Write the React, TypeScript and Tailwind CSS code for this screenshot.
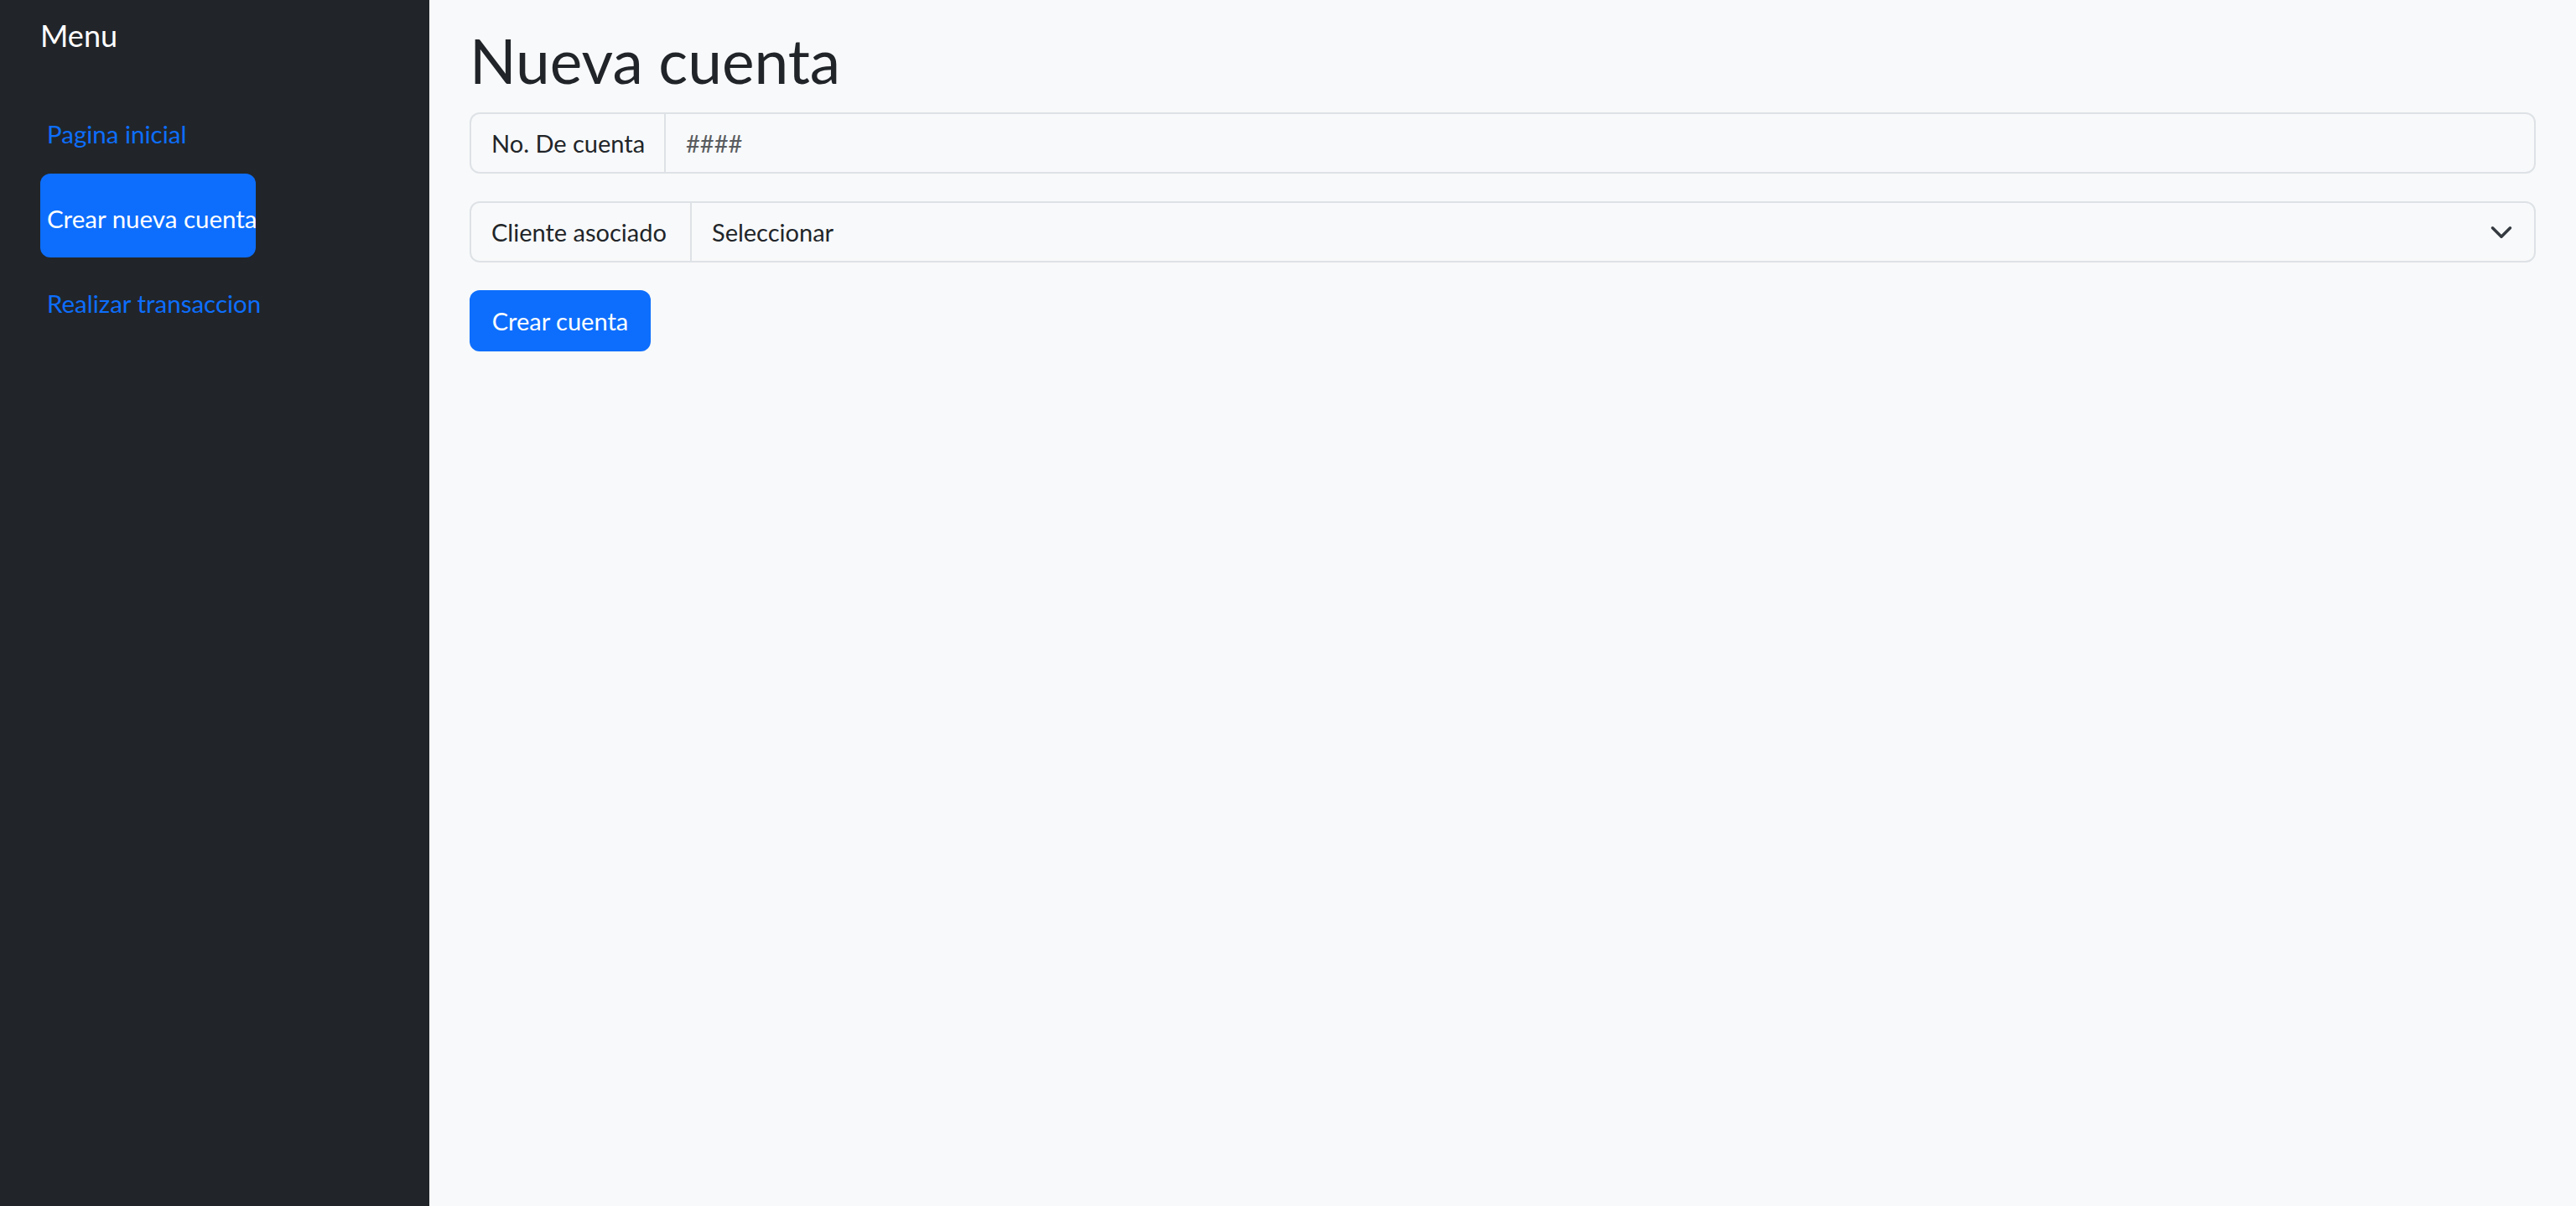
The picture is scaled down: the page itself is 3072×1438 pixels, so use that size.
import { useState } from "react";

const NAV = [
  { label: "Pagina inicial", active: false },
  { label: "Crear nueva cuenta", active: true },
  { label: "Realizar transaccion", active: false },
];

function ChevronDown() {
  return (
    <svg viewBox="0 0 16 16" className="w-[28px] h-[28px]" fill="none">
      <path
        d="m2 5 6 6 6-6"
        stroke="#343a40"
        strokeWidth="2"
        strokeLinecap="round"
        strokeLinejoin="round"
      />
    </svg>
  );
}

export default function App() {
  const [cuenta, setCuenta] = useState("");
  const [cliente, setCliente] = useState("");

  return (
    <div className="flex h-[1438px] w-full font-[Lato,sans-serif] text-[#212529]">
      {/* Sidebar */}
      <aside className="w-[512px] shrink-0 bg-[#212529] px-[48px] pt-[20px]">
        <p className="text-[36px] leading-[44px] text-white">Menu</p>
        <nav className="mt-[42px] flex flex-col gap-[1px]">
          {NAV.map((item) => (
            <a
              key={item.label}
              href="#"
              className={`h-[100px] w-[257px] flex items-center pt-[8px] pl-[8px] text-[29.5px] leading-[1.2] whitespace-nowrap rounded-[12px] ${
                item.active ? "bg-[#0d6efd] text-white" : "text-[#0d6efd]"
              }`}
            >
              {item.label}
            </a>
          ))}
        </nav>
      </aside>

      {/* Main */}
      <main className="flex-1 bg-[#f8f9fa] px-[48px] pt-[28px]">
        <h1 className="text-[73px] leading-[88px] mb-[18px]">Nueva cuenta</h1>

        <div className="flex h-[73px] border-2 border-[#dee2e6] rounded-[12px] text-[29px]">
          <span className="w-[232px] shrink-0 flex items-center pl-[24px] border-r-2 border-[#dee2e6] whitespace-nowrap">
            No. De cuenta
          </span>
          <input
            value={cuenta}
            onChange={(e) => setCuenta(e.target.value)}
            placeholder="####"
            className="flex-1 bg-transparent px-[24px] outline-none placeholder:text-[#595c5f]"
          />
        </div>

        <div className="relative flex h-[73px] mt-[33px] border-2 border-[#dee2e6] rounded-[12px] text-[29px]">
          <span className="w-[263px] shrink-0 flex items-center pl-[24px] border-r-2 border-[#dee2e6] whitespace-nowrap">
            Cliente asociado
          </span>
          <select
            value={cliente}
            onChange={(e) => setCliente(e.target.value)}
            className="flex-1 appearance-none bg-transparent px-[24px] outline-none"
          >
            <option value="">Seleccionar</option>
          </select>
          <span className="pointer-events-none absolute right-[25px] top-1/2 -translate-y-1/2">
            <ChevronDown />
          </span>
        </div>

        <button className="mt-[33px] w-[216px] h-[73px] flex items-center justify-center rounded-[12px] bg-[#0d6efd] text-white text-[29px]">
          Crear cuenta
        </button>
      </main>
    </div>
  );
}
